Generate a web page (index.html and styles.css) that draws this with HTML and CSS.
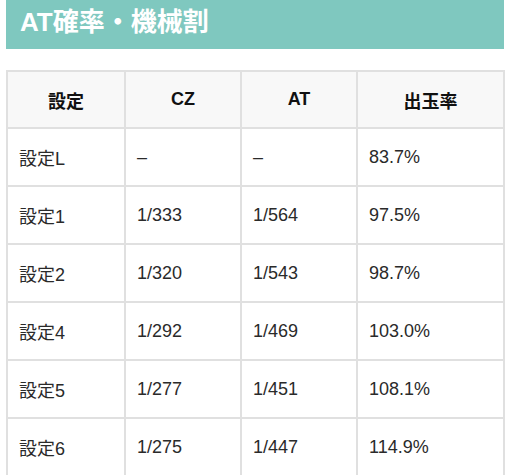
FILE: index.html
```html
<!DOCTYPE html>
<html lang="ja">
<head>
<meta charset="utf-8">
<link rel="stylesheet" href="styles.css">
</head>
<body>
<div class="page">
  <h2 class="banner">AT確率・機械割</h2>
  <table class="spec">
    <colgroup>
      <col class="c1"><col class="c2"><col class="c3"><col class="c4">
    </colgroup>
    <thead>
      <tr><th>設定</th><th>CZ</th><th>AT</th><th>出玉率</th></tr>
    </thead>
    <tbody>
      <tr><td>設定L</td><td>–</td><td>–</td><td>83.7%</td></tr>
      <tr><td>設定1</td><td>1/333</td><td>1/564</td><td>97.5%</td></tr>
      <tr><td>設定2</td><td>1/320</td><td>1/543</td><td>98.7%</td></tr>
      <tr><td>設定4</td><td>1/292</td><td>1/469</td><td>103.0%</td></tr>
      <tr><td>設定5</td><td>1/277</td><td>1/451</td><td>108.1%</td></tr>
      <tr><td>設定6</td><td>1/275</td><td>1/447</td><td>114.9%</td></tr>
    </tbody>
  </table>
</div>
</body>
</html>
```

FILE: styles.css
```css
html, body {
  margin: 0;
  padding: 0;
  background: #ffffff;
}
body {
  font-family: "Liberation Sans", "Noto Sans CJK JP", sans-serif;
  color: #222222;
}
.page {
  padding: 0 8px 0 6px;
}
.banner {
  margin: 0;
  height: 49px;
  box-sizing: border-box;
  background: #7fc8bf;
  color: #ffffff;
  font-size: 26px;
  font-weight: bold;
  line-height: 45px;
  padding-left: 14px;
}
.spec {
  margin-top: 21px;
  width: 497px;
  border-collapse: collapse;
  table-layout: fixed;
  font-size: 18px;
}
.c1 { width: 118px; }
.c2 { width: 116px; }
.c3 { width: 116px; }
.c4 { width: 147px; }
.spec th, .spec td {
  border: 2px solid #e0e0e0;
  padding: 0 11px;
  box-sizing: border-box;
}
.spec th {
  background: #f8f8f8;
  color: #111111;
  font-weight: bold;
  text-align: center;
  height: 57px;
}
.spec td {
  text-align: left;
  font-weight: normal;
  color: #2a2a2a;
  height: 58px;
}
```
